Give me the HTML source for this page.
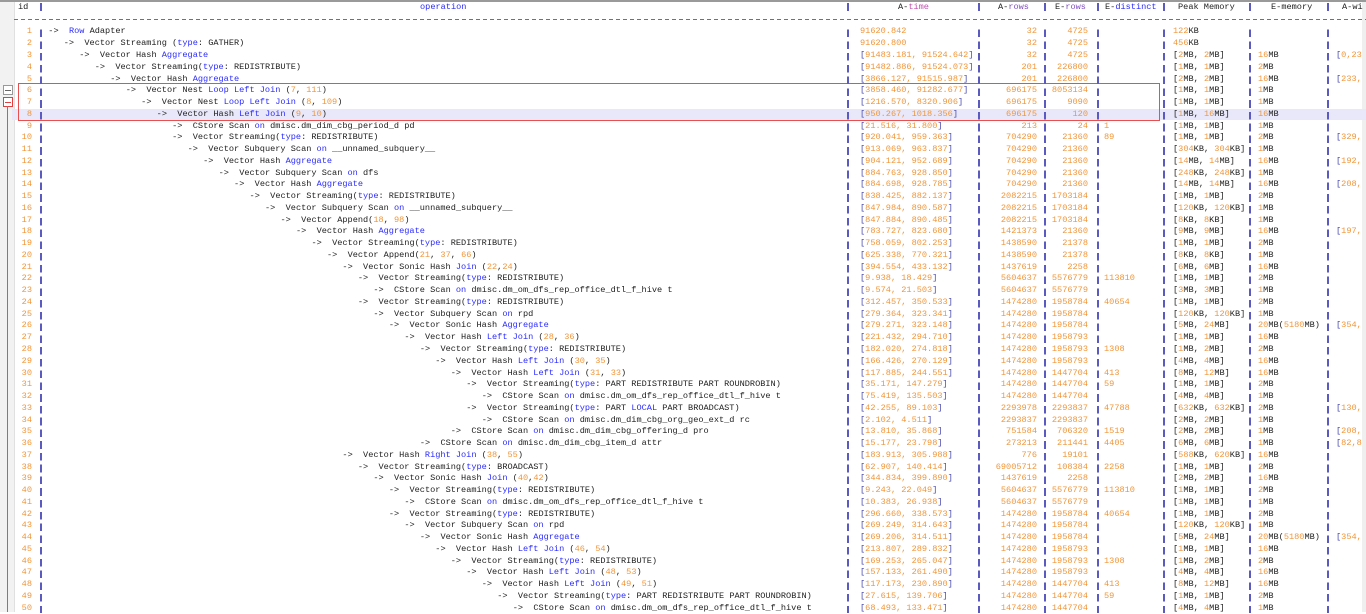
<!DOCTYPE html>
<html><head><meta charset="utf-8"><style>
body{margin:0;width:1366px;height:612px;overflow:hidden;background:#fff;font:8.6px/11.76px "Liberation Mono",monospace;color:#222;position:relative}
.r{position:absolute;left:0;width:1366px;height:11.76px;white-space:pre;margin-top:0.9px}
.r span{position:absolute;top:0}
.i{right:1334px;color:#f0963a}
.t{left:860px;color:#f0963a}
.ar{right:329px;color:#f0963a}
.er{right:278px;color:#f0963a}
.ed{left:1104px;color:#f0963a}
.pk{left:1173px}
.em{left:1258px}
.aw{left:1336px;color:#f0963a}
o{color:#f0963a} k{color:#2b2bff} g{color:#4a4ab0}
.sep{position:absolute;top:26.9px;width:2px;height:586px;background:repeating-linear-gradient(to bottom,transparent 0,transparent 2.6px,#5a5ac0 2.6px,#5a5ac0 10.2px,transparent 10.2px,transparent 11.76px)}
.hs{position:absolute;top:3px;width:2px;height:8px;background:#5a5ac0}
.h{position:absolute;top:1px;line-height:12px;white-space:pre}
</style></head><body>
<div style="position:absolute;left:0;top:0;width:1366px;height:2px;background:#9a9a9a"></div>
<div style="position:absolute;left:0;top:2px;width:14px;height:610px;background:#f2f2f2;border-right:1px solid #e0e0e0"></div>
<div style="position:absolute;left:1362px;top:2px;width:4px;height:610px;background:#efefef"></div>
<div style="position:absolute;left:12px;top:108.6px;width:1354px;height:11.8px;background:#e8e8fa"></div>
<div style="position:absolute;left:18px;top:83px;width:1140px;height:36px;border:1px solid #e85050"></div>
<div style="position:absolute;left:3px;top:85px;width:8px;height:8px;border:1px solid #999;background:#fff"><div style="position:absolute;left:1px;top:3.5px;width:6px;height:1px;background:#666"></div></div>
<div style="position:absolute;left:3px;top:97px;width:8px;height:8px;border:1px solid #e04040;background:#fff"><div style="position:absolute;left:1px;top:3.5px;width:6px;height:1px;background:#e04040"></div></div>
<div style="position:absolute;left:7px;top:106px;width:1px;height:506px;background:#e85050"></div>
<div style="position:absolute;left:14px;top:19px;width:1352px;height:1px;background:repeating-linear-gradient(to right,#3a9a3a 0,#3a9a3a 4px,transparent 4px,transparent 7px)"></div>

<div class="h" style="left:18px">id</div>
<div class="h" style="left:420px;color:#2b2bff">operation</div>
<div class="h" style="left:898px">A-<span style="color:#c050b0">time</span></div>
<div class="h" style="left:998px">A-<span style="color:#8050c0">rows</span></div>
<div class="h" style="left:1055px">E-<span style="color:#8050c0">rows</span></div>
<div class="h" style="left:1105px">E-<span style="color:#2b2bff">distinct</span></div>
<div class="h" style="left:1178px">Peak Memory</div>
<div class="h" style="left:1271px">E-memory</div>
<div class="h" style="left:1342px">A-wi</div>
<div class="hs" style="left:40px"></div><div class="hs" style="left:847px"></div><div class="hs" style="left:978px"></div><div class="hs" style="left:1044px"></div><div class="hs" style="left:1097px"></div><div class="hs" style="left:1163px"></div><div class="hs" style="left:1249px"></div><div class="hs" style="left:1327px"></div>

<div class="sep" style="left:40px"></div><div class="sep" style="left:847px"></div><div class="sep" style="left:978px"></div><div class="sep" style="left:1044px"></div><div class="sep" style="left:1097px"></div><div class="sep" style="left:1163px"></div><div class="sep" style="left:1249px"></div><div class="sep" style="left:1327px"></div>

<div class="r" style="top:25.6px"><span class="i">1</span><span style="left:48.3px">-&gt;  <k>Row</k> Adapter</span><span class="t">91620.842</span><span class="ar">32</span><span class="er">4725</span><span class="pk"><o>122</o>KB</span></div>
<div class="r" style="top:37.36px"><span class="i">2</span><span style="left:63.78px">-&gt;  Vector Streaming (<k>type</k>: GATHER)</span><span class="t">91620.800</span><span class="ar">32</span><span class="er">4725</span><span class="pk"><o>456</o>KB</span></div>
<div class="r" style="top:49.12px"><span class="i">3</span><span style="left:79.26px">-&gt;  Vector Hash <k>Aggregate</k></span><span class="t"><g>[</g>91483.181, 91524.642<g>]</g></span><span class="ar">32</span><span class="er">4725</span><span class="pk">[<o>2</o>MB, <o>2</o>MB]</span><span class="em"><o>16</o>MB</span><span class="aw"><g>[</g>0,23</span></div>
<div class="r" style="top:60.88px"><span class="i">4</span><span style="left:94.74px">-&gt;  Vector Streaming(<k>type</k>: REDISTRIBUTE)</span><span class="t"><g>[</g>91482.886, 91524.073<g>]</g></span><span class="ar">201</span><span class="er">226800</span><span class="pk">[<o>1</o>MB, <o>1</o>MB]</span><span class="em"><o>2</o>MB</span></div>
<div class="r" style="top:72.64px"><span class="i">5</span><span style="left:110.22px">-&gt;  Vector Hash <k>Aggregate</k></span><span class="t"><g>[</g>3866.127, 91515.987<g>]</g></span><span class="ar">201</span><span class="er">226800</span><span class="pk">[<o>2</o>MB, <o>2</o>MB]</span><span class="em"><o>16</o>MB</span><span class="aw"><g>[</g>233,</span></div>
<div class="r" style="top:84.4px"><span class="i">6</span><span style="left:125.7px">-&gt;  Vector Nest <k>Loop Left Join</k> (<o>7</o>, <o>111</o>)</span><span class="t"><g>[</g>3858.460, 91282.677<g>]</g></span><span class="ar">696175</span><span class="er">8053134</span><span class="pk">[<o>1</o>MB, <o>1</o>MB]</span><span class="em"><o>1</o>MB</span></div>
<div class="r" style="top:96.16px"><span class="i">7</span><span style="left:141.18px">-&gt;  Vector Nest <k>Loop Left Join</k> (<o>8</o>, <o>109</o>)</span><span class="t"><g>[</g>1216.570, 8320.906<g>]</g></span><span class="ar">696175</span><span class="er">9090</span><span class="pk">[<o>1</o>MB, <o>1</o>MB]</span><span class="em"><o>1</o>MB</span></div>
<div class="r" style="top:107.92px"><span class="i">8</span><span style="left:156.66px">-&gt;  Vector Hash <k>Left Join</k> (<o>9</o>, <o>10</o>)</span><span class="t"><g>[</g>950.267, 1018.356<g>]</g></span><span class="ar">696175</span><span class="er">120</span><span class="pk">[<o>1</o>MB, <o>16</o>MB]</span><span class="em"><o>16</o>MB</span></div>
<div class="r" style="top:119.68px"><span class="i">9</span><span style="left:172.14px">-&gt;  CStore Scan <k>on</k> dmisc.dm_dim_cbg_period_d pd</span><span class="t"><g>[</g>21.516, 31.800<g>]</g></span><span class="ar">213</span><span class="er">24</span><span class="ed">1</span><span class="pk">[<o>1</o>MB, <o>1</o>MB]</span><span class="em"><o>1</o>MB</span></div>
<div class="r" style="top:131.44px"><span class="i">10</span><span style="left:172.14px">-&gt;  Vector Streaming(<k>type</k>: REDISTRIBUTE)</span><span class="t"><g>[</g>920.041, 959.363<g>]</g></span><span class="ar">704290</span><span class="er">21360</span><span class="ed">89</span><span class="pk">[<o>1</o>MB, <o>1</o>MB]</span><span class="em"><o>2</o>MB</span><span class="aw"><g>[</g>329,</span></div>
<div class="r" style="top:143.2px"><span class="i">11</span><span style="left:187.62px">-&gt;  Vector Subquery Scan <k>on</k> __unnamed_subquery__</span><span class="t"><g>[</g>913.069, 963.837<g>]</g></span><span class="ar">704290</span><span class="er">21360</span><span class="pk">[<o>304</o>KB, <o>304</o>KB]</span><span class="em"><o>1</o>MB</span></div>
<div class="r" style="top:154.96px"><span class="i">12</span><span style="left:203.1px">-&gt;  Vector Hash <k>Aggregate</k></span><span class="t"><g>[</g>904.121, 952.689<g>]</g></span><span class="ar">704290</span><span class="er">21360</span><span class="pk">[<o>14</o>MB, <o>14</o>MB]</span><span class="em"><o>16</o>MB</span><span class="aw"><g>[</g>192,</span></div>
<div class="r" style="top:166.72px"><span class="i">13</span><span style="left:218.58px">-&gt;  Vector Subquery Scan <k>on</k> dfs</span><span class="t"><g>[</g>884.763, 928.850<g>]</g></span><span class="ar">704290</span><span class="er">21360</span><span class="pk">[<o>248</o>KB, <o>248</o>KB]</span><span class="em"><o>1</o>MB</span></div>
<div class="r" style="top:178.48px"><span class="i">14</span><span style="left:234.06px">-&gt;  Vector Hash <k>Aggregate</k></span><span class="t"><g>[</g>884.698, 928.785<g>]</g></span><span class="ar">704290</span><span class="er">21360</span><span class="pk">[<o>14</o>MB, <o>14</o>MB]</span><span class="em"><o>16</o>MB</span><span class="aw"><g>[</g>208,</span></div>
<div class="r" style="top:190.24px"><span class="i">15</span><span style="left:249.54px">-&gt;  Vector Streaming(<k>type</k>: REDISTRIBUTE)</span><span class="t"><g>[</g>838.425, 882.137<g>]</g></span><span class="ar">2082215</span><span class="er">1703184</span><span class="pk">[<o>1</o>MB, <o>1</o>MB]</span><span class="em"><o>2</o>MB</span></div>
<div class="r" style="top:202px"><span class="i">16</span><span style="left:265.02px">-&gt;  Vector Subquery Scan <k>on</k> __unnamed_subquery__</span><span class="t"><g>[</g>847.984, 890.587<g>]</g></span><span class="ar">2082215</span><span class="er">1703184</span><span class="pk">[<o>120</o>KB, <o>120</o>KB]</span><span class="em"><o>1</o>MB</span></div>
<div class="r" style="top:213.76px"><span class="i">17</span><span style="left:280.5px">-&gt;  Vector Append(<o>18</o>, <o>98</o>)</span><span class="t"><g>[</g>847.884, 890.485<g>]</g></span><span class="ar">2082215</span><span class="er">1703184</span><span class="pk">[<o>8</o>KB, <o>8</o>KB]</span><span class="em"><o>1</o>MB</span></div>
<div class="r" style="top:225.52px"><span class="i">18</span><span style="left:295.98px">-&gt;  Vector Hash <k>Aggregate</k></span><span class="t"><g>[</g>783.727, 823.680<g>]</g></span><span class="ar">1421373</span><span class="er">21360</span><span class="pk">[<o>9</o>MB, <o>9</o>MB]</span><span class="em"><o>16</o>MB</span><span class="aw"><g>[</g>197,</span></div>
<div class="r" style="top:237.28px"><span class="i">19</span><span style="left:311.46px">-&gt;  Vector Streaming(<k>type</k>: REDISTRIBUTE)</span><span class="t"><g>[</g>758.059, 802.253<g>]</g></span><span class="ar">1438590</span><span class="er">21378</span><span class="pk">[<o>1</o>MB, <o>1</o>MB]</span><span class="em"><o>2</o>MB</span></div>
<div class="r" style="top:249.04px"><span class="i">20</span><span style="left:326.94px">-&gt;  Vector Append(<o>21</o>, <o>37</o>, <o>66</o>)</span><span class="t"><g>[</g>625.338, 770.321<g>]</g></span><span class="ar">1438590</span><span class="er">21378</span><span class="pk">[<o>8</o>KB, <o>8</o>KB]</span><span class="em"><o>1</o>MB</span></div>
<div class="r" style="top:260.8px"><span class="i">21</span><span style="left:342.42px">-&gt;  Vector Sonic Hash <k>Join</k> (<o>22</o>,<o>24</o>)</span><span class="t"><g>[</g>394.554, 433.132<g>]</g></span><span class="ar">1437619</span><span class="er">2258</span><span class="pk">[<o>6</o>MB, <o>6</o>MB]</span><span class="em"><o>16</o>MB</span></div>
<div class="r" style="top:272.56px"><span class="i">22</span><span style="left:357.9px">-&gt;  Vector Streaming(<k>type</k>: REDISTRIBUTE)</span><span class="t"><g>[</g>9.938, 18.429<g>]</g></span><span class="ar">5604637</span><span class="er">5576779</span><span class="ed">113810</span><span class="pk">[<o>1</o>MB, <o>1</o>MB]</span><span class="em"><o>2</o>MB</span></div>
<div class="r" style="top:284.32px"><span class="i">23</span><span style="left:373.38px">-&gt;  CStore Scan <k>on</k> dmisc.dm_om_dfs_rep_office_dtl_f_hive t</span><span class="t"><g>[</g>9.574, 21.503<g>]</g></span><span class="ar">5604637</span><span class="er">5576779</span><span class="pk">[<o>3</o>MB, <o>3</o>MB]</span><span class="em"><o>1</o>MB</span></div>
<div class="r" style="top:296.08px"><span class="i">24</span><span style="left:357.9px">-&gt;  Vector Streaming(<k>type</k>: REDISTRIBUTE)</span><span class="t"><g>[</g>312.457, 350.533<g>]</g></span><span class="ar">1474280</span><span class="er">1958784</span><span class="ed">40654</span><span class="pk">[<o>1</o>MB, <o>1</o>MB]</span><span class="em"><o>2</o>MB</span></div>
<div class="r" style="top:307.84px"><span class="i">25</span><span style="left:373.38px">-&gt;  Vector Subquery Scan <k>on</k> rpd</span><span class="t"><g>[</g>279.364, 323.341<g>]</g></span><span class="ar">1474280</span><span class="er">1958784</span><span class="pk">[<o>120</o>KB, <o>120</o>KB]</span><span class="em"><o>1</o>MB</span></div>
<div class="r" style="top:319.6px"><span class="i">26</span><span style="left:388.86px">-&gt;  Vector Sonic Hash <k>Aggregate</k></span><span class="t"><g>[</g>279.271, 323.148<g>]</g></span><span class="ar">1474280</span><span class="er">1958784</span><span class="pk">[<o>5</o>MB, <o>24</o>MB]</span><span class="em"><o>20</o>MB(<o>5180</o>MB)</span><span class="aw"><g>[</g>354,</span></div>
<div class="r" style="top:331.36px"><span class="i">27</span><span style="left:404.34px">-&gt;  Vector Hash <k>Left Join</k> (<o>28</o>, <o>36</o>)</span><span class="t"><g>[</g>221.432, 294.710<g>]</g></span><span class="ar">1474280</span><span class="er">1958793</span><span class="pk">[<o>1</o>MB, <o>1</o>MB]</span><span class="em"><o>16</o>MB</span></div>
<div class="r" style="top:343.12px"><span class="i">28</span><span style="left:419.82px">-&gt;  Vector Streaming(<k>type</k>: REDISTRIBUTE)</span><span class="t"><g>[</g>182.020, 274.818<g>]</g></span><span class="ar">1474280</span><span class="er">1958793</span><span class="ed">1308</span><span class="pk">[<o>1</o>MB, <o>2</o>MB]</span><span class="em"><o>2</o>MB</span></div>
<div class="r" style="top:354.88px"><span class="i">29</span><span style="left:435.3px">-&gt;  Vector Hash <k>Left Join</k> (<o>30</o>, <o>35</o>)</span><span class="t"><g>[</g>166.426, 270.129<g>]</g></span><span class="ar">1474280</span><span class="er">1958793</span><span class="pk">[<o>4</o>MB, <o>4</o>MB]</span><span class="em"><o>16</o>MB</span></div>
<div class="r" style="top:366.64px"><span class="i">30</span><span style="left:450.78px">-&gt;  Vector Hash <k>Left Join</k> (<o>31</o>, <o>33</o>)</span><span class="t"><g>[</g>117.885, 244.551<g>]</g></span><span class="ar">1474280</span><span class="er">1447704</span><span class="ed">413</span><span class="pk">[<o>8</o>MB, <o>12</o>MB]</span><span class="em"><o>16</o>MB</span></div>
<div class="r" style="top:378.4px"><span class="i">31</span><span style="left:466.26px">-&gt;  Vector Streaming(<k>type</k>: PART REDISTRIBUTE PART ROUNDROBIN)</span><span class="t"><g>[</g>35.171, 147.279<g>]</g></span><span class="ar">1474280</span><span class="er">1447704</span><span class="ed">59</span><span class="pk">[<o>1</o>MB, <o>1</o>MB]</span><span class="em"><o>2</o>MB</span></div>
<div class="r" style="top:390.16px"><span class="i">32</span><span style="left:481.74px">-&gt;  CStore Scan <k>on</k> dmisc.dm_om_dfs_rep_office_dtl_f_hive t</span><span class="t"><g>[</g>75.419, 135.503<g>]</g></span><span class="ar">1474280</span><span class="er">1447704</span><span class="pk">[<o>4</o>MB, <o>4</o>MB]</span><span class="em"><o>1</o>MB</span></div>
<div class="r" style="top:401.92px"><span class="i">33</span><span style="left:466.26px">-&gt;  Vector Streaming(<k>type</k>: PART <k>LOCAL</k> PART BROADCAST)</span><span class="t"><g>[</g>42.255, 89.103<g>]</g></span><span class="ar">2293978</span><span class="er">2293837</span><span class="ed">47788</span><span class="pk">[<o>632</o>KB, <o>632</o>KB]</span><span class="em"><o>2</o>MB</span><span class="aw"><g>[</g>130,</span></div>
<div class="r" style="top:413.68px"><span class="i">34</span><span style="left:481.74px">-&gt;  CStore Scan <k>on</k> dmisc.dm_dim_cbg_org_geo_ext_d rc</span><span class="t"><g>[</g>2.102, 4.511<g>]</g></span><span class="ar">2293837</span><span class="er">2293837</span><span class="pk">[<o>2</o>MB, <o>2</o>MB]</span><span class="em"><o>1</o>MB</span></div>
<div class="r" style="top:425.44px"><span class="i">35</span><span style="left:450.78px">-&gt;  CStore Scan <k>on</k> dmisc.dm_dim_cbg_offering_d pro</span><span class="t"><g>[</g>13.810, 35.868<g>]</g></span><span class="ar">751584</span><span class="er">706320</span><span class="ed">1519</span><span class="pk">[<o>2</o>MB, <o>2</o>MB]</span><span class="em"><o>1</o>MB</span><span class="aw"><g>[</g>208,</span></div>
<div class="r" style="top:437.2px"><span class="i">36</span><span style="left:419.82px">-&gt;  CStore Scan <k>on</k> dmisc.dm_dim_cbg_item_d attr</span><span class="t"><g>[</g>15.177, 23.798<g>]</g></span><span class="ar">273213</span><span class="er">211441</span><span class="ed">4405</span><span class="pk">[<o>6</o>MB, <o>6</o>MB]</span><span class="em"><o>1</o>MB</span><span class="aw"><g>[</g>82,8</span></div>
<div class="r" style="top:448.96px"><span class="i">37</span><span style="left:342.42px">-&gt;  Vector Hash <k>Right Join</k> (<o>38</o>, <o>55</o>)</span><span class="t"><g>[</g>183.913, 305.988<g>]</g></span><span class="ar">776</span><span class="er">19101</span><span class="pk">[<o>588</o>KB, <o>620</o>KB]</span><span class="em"><o>16</o>MB</span></div>
<div class="r" style="top:460.72px"><span class="i">38</span><span style="left:357.9px">-&gt;  Vector Streaming(<k>type</k>: BROADCAST)</span><span class="t"><g>[</g>62.907, 140.414<g>]</g></span><span class="ar">69005712</span><span class="er">108384</span><span class="ed">2258</span><span class="pk">[<o>1</o>MB, <o>1</o>MB]</span><span class="em"><o>2</o>MB</span></div>
<div class="r" style="top:472.48px"><span class="i">39</span><span style="left:373.38px">-&gt;  Vector Sonic Hash <k>Join</k> (<o>40</o>,<o>42</o>)</span><span class="t"><g>[</g>344.834, 399.890<g>]</g></span><span class="ar">1437619</span><span class="er">2258</span><span class="pk">[<o>2</o>MB, <o>2</o>MB]</span><span class="em"><o>16</o>MB</span></div>
<div class="r" style="top:484.24px"><span class="i">40</span><span style="left:388.86px">-&gt;  Vector Streaming(<k>type</k>: REDISTRIBUTE)</span><span class="t"><g>[</g>9.243, 22.049<g>]</g></span><span class="ar">5604637</span><span class="er">5576779</span><span class="ed">113810</span><span class="pk">[<o>1</o>MB, <o>1</o>MB]</span><span class="em"><o>2</o>MB</span></div>
<div class="r" style="top:496px"><span class="i">41</span><span style="left:404.34px">-&gt;  CStore Scan <k>on</k> dmisc.dm_om_dfs_rep_office_dtl_f_hive t</span><span class="t"><g>[</g>10.383, 26.938<g>]</g></span><span class="ar">5604637</span><span class="er">5576779</span><span class="pk">[<o>1</o>MB, <o>1</o>MB]</span><span class="em"><o>1</o>MB</span></div>
<div class="r" style="top:507.76px"><span class="i">42</span><span style="left:388.86px">-&gt;  Vector Streaming(<k>type</k>: REDISTRIBUTE)</span><span class="t"><g>[</g>296.660, 338.573<g>]</g></span><span class="ar">1474280</span><span class="er">1958784</span><span class="ed">40654</span><span class="pk">[<o>1</o>MB, <o>1</o>MB]</span><span class="em"><o>2</o>MB</span></div>
<div class="r" style="top:519.52px"><span class="i">43</span><span style="left:404.34px">-&gt;  Vector Subquery Scan <k>on</k> rpd</span><span class="t"><g>[</g>269.249, 314.643<g>]</g></span><span class="ar">1474280</span><span class="er">1958784</span><span class="pk">[<o>120</o>KB, <o>120</o>KB]</span><span class="em"><o>1</o>MB</span></div>
<div class="r" style="top:531.28px"><span class="i">44</span><span style="left:419.82px">-&gt;  Vector Sonic Hash <k>Aggregate</k></span><span class="t"><g>[</g>269.206, 314.511<g>]</g></span><span class="ar">1474280</span><span class="er">1958784</span><span class="pk">[<o>5</o>MB, <o>24</o>MB]</span><span class="em"><o>20</o>MB(<o>5180</o>MB)</span><span class="aw"><g>[</g>354,</span></div>
<div class="r" style="top:543.04px"><span class="i">45</span><span style="left:435.3px">-&gt;  Vector Hash <k>Left Join</k> (<o>46</o>, <o>54</o>)</span><span class="t"><g>[</g>213.807, 289.832<g>]</g></span><span class="ar">1474280</span><span class="er">1958793</span><span class="pk">[<o>1</o>MB, <o>1</o>MB]</span><span class="em"><o>16</o>MB</span></div>
<div class="r" style="top:554.8px"><span class="i">46</span><span style="left:450.78px">-&gt;  Vector Streaming(<k>type</k>: REDISTRIBUTE)</span><span class="t"><g>[</g>169.253, 265.047<g>]</g></span><span class="ar">1474280</span><span class="er">1958793</span><span class="ed">1308</span><span class="pk">[<o>1</o>MB, <o>2</o>MB]</span><span class="em"><o>2</o>MB</span></div>
<div class="r" style="top:566.56px"><span class="i">47</span><span style="left:466.26px">-&gt;  Vector Hash <k>Left Join</k> (<o>48</o>, <o>53</o>)</span><span class="t"><g>[</g>157.133, 261.490<g>]</g></span><span class="ar">1474280</span><span class="er">1958793</span><span class="pk">[<o>4</o>MB, <o>4</o>MB]</span><span class="em"><o>16</o>MB</span></div>
<div class="r" style="top:578.32px"><span class="i">48</span><span style="left:481.74px">-&gt;  Vector Hash <k>Left Join</k> (<o>49</o>, <o>51</o>)</span><span class="t"><g>[</g>117.173, 230.890<g>]</g></span><span class="ar">1474280</span><span class="er">1447704</span><span class="ed">413</span><span class="pk">[<o>8</o>MB, <o>12</o>MB]</span><span class="em"><o>16</o>MB</span></div>
<div class="r" style="top:590.08px"><span class="i">49</span><span style="left:497.22px">-&gt;  Vector Streaming(<k>type</k>: PART REDISTRIBUTE PART ROUNDROBIN)</span><span class="t"><g>[</g>27.615, 139.706<g>]</g></span><span class="ar">1474280</span><span class="er">1447704</span><span class="ed">59</span><span class="pk">[<o>1</o>MB, <o>1</o>MB]</span><span class="em"><o>2</o>MB</span></div>
<div class="r" style="top:601.84px"><span class="i">50</span><span style="left:512.7px">-&gt;  CStore Scan <k>on</k> dmisc.dm_om_dfs_rep_office_dtl_f_hive t</span><span class="t"><g>[</g>68.493, 133.471<g>]</g></span><span class="ar">1474280</span><span class="er">1447704</span><span class="pk">[<o>4</o>MB, <o>4</o>MB]</span><span class="em"><o>1</o>MB</span></div>
</body></html>
